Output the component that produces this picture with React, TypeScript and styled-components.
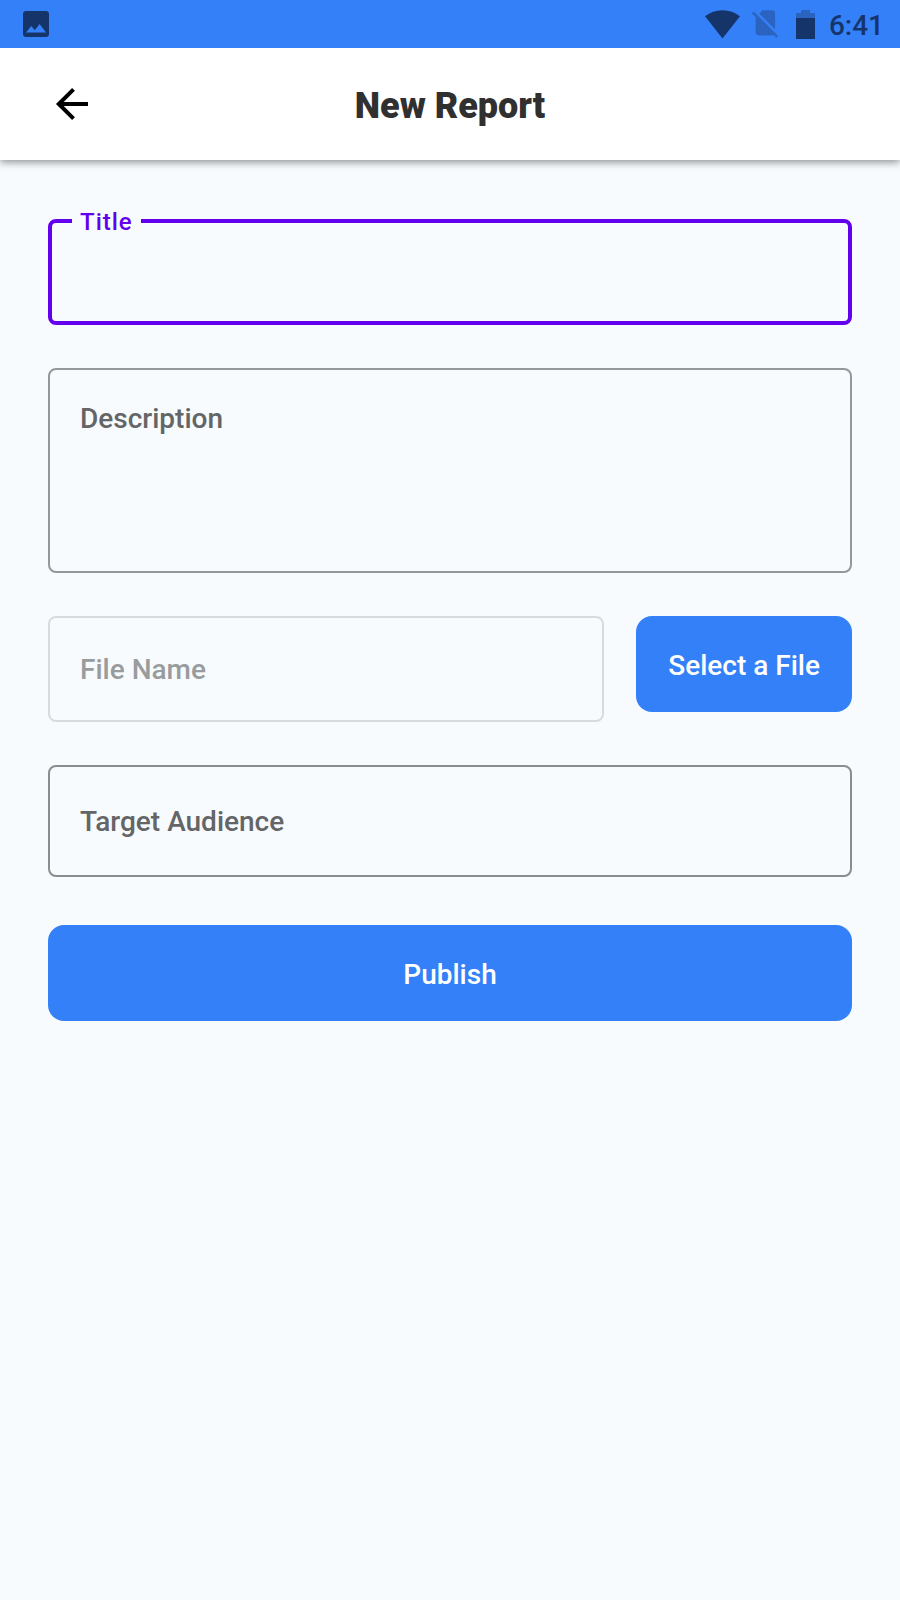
import React, { useState } from "react";
import styled, { createGlobalStyle } from "styled-components";

const color = {
  blue: "#3480f8",
  navy: "#15356a",
  faded: "#2a64c0",
  page: "#f7fbfe",
  ink: "#303030",
  accent: "#6200ee",
  label: "#646567",
  outline: "#959899",
  outlineDark: "#8a8d8e",
  outlineOff: "#d7dbde",
  labelOff: "#999c9d",
};

const GlobalStyle = createGlobalStyle`
  *, *::before, *::after { box-sizing: border-box; }
  body {
    margin: 0;
    background: ${color.page};
    font-family: Roboto, "Liberation Sans", sans-serif;
    font-size: 28px;
    font-weight: 500;
  }
`;

const Screen = styled.div`
  min-height: 100vh;
  background: ${color.page};
`;

const StatusBar = styled.div`
  position: relative;
  z-index: 1;
  display: flex;
  align-items: center;
  justify-content: space-between;
  height: 48px;
  padding: 0 16px 0 23px;
  background: ${color.blue};
  color: ${color.navy};
`;

const StatusIcons = styled.div`
  display: flex;
  align-items: center;
`;

const Clock = styled.time`
  margin-left: 14px;
  padding-top: 4px;
  line-height: 44px;
`;

const Header = styled.header`
  display: grid;
  grid-template-columns: 1fr auto 1fr;
  align-items: center;
  height: 112px;
  padding: 0 48px;
  background: #fff;
  box-shadow: 0 2px 8px rgba(0, 0, 0, 0.45);
`;

const BackButton = styled.button`
  display: flex;
  justify-self: start;
  padding: 0;
  border: 0;
  background: none;
  cursor: pointer;
`;

const Heading = styled.h1`
  margin: 0;
  padding-top: 4px;
  color: ${color.ink};
  font-size: 36px;
  font-weight: 900;
  line-height: 44px;
`;

const Form = styled.form`
  display: flex;
  flex-direction: column;
  gap: 43px;
  padding: 59px 48px 48px;
`;

const FileRow = styled.div`
  display: flex;
  align-items: flex-start;
  gap: 32px;
`;

const Field = styled.div`
  position: relative;
  flex: 1;
  display: flex;
  min-width: 0;
`;

type ControlProps = { $size?: number; $tone?: string; $active?: boolean };

const TextInput = styled.input<ControlProps>`
  width: 100%;
  height: ${(p) => p.$size ?? 106}px;
  padding: 0 30px;
  border: ${(p) => (p.$active ? 4 : 2)}px solid
    ${(p) => (p.$active ? color.accent : p.$tone ?? color.outline)};
  border-radius: 8px;
  outline: 0;
  background: transparent;
  color: ${color.ink};
  font: inherit;
`;

const TextArea = styled(TextInput).attrs({ as: "textarea" })`
  padding: 32px 30px;
  resize: none;
`;

const Label = styled.label<{ $tone?: string; $top?: boolean }>`
  position: absolute;
  left: 32px;
  top: ${(p) => (p.$top ? "33px" : "0")};
  bottom: ${(p) => (p.$top ? "auto" : "0")};
  display: flex;
  align-items: center;
  padding-top: 2px;
  color: ${(p) => p.$tone ?? color.label};
  line-height: 32px;
  pointer-events: none;
`;

const FloatingLabel = styled.label`
  position: absolute;
  left: 24px;
  top: -11px;
  padding: 0 8px;
  background: ${color.page};
  color: ${color.accent};
  font-size: 24px;
  line-height: 28px;
  letter-spacing: 1px;
`;

const Button = styled.button`
  height: 96px;
  padding: 2px 32px 0;
  border: 0;
  border-radius: 16px;
  background: ${color.blue};
  color: #fff;
  font: inherit;
  white-space: nowrap;
  cursor: pointer;
`;

const PublishButton = styled(Button)`
  margin-top: 5px;
`;

const ImageIcon = () => (
  <svg width="26" height="26" viewBox="0 0 26 26" aria-hidden="true">
    <rect width="26" height="26" rx="3" fill={color.navy} />
    <path d="M3 21.5 8.3 15l3.5 4.2 4.8-6.2 6.4 8.5z" fill={color.blue} />
  </svg>
);

const WifiIcon = () => (
  <svg width="35" height="29" viewBox="0 0 35 29" aria-hidden="true">
    <path d="M17.5 28.5 0 6.3C5 2.3 11 .2 17.5.2S30 2.3 35 6.3z" fill={color.navy} />
  </svg>
);

const SimIconSlot = styled.span`
  display: flex;
  margin: 0 18px 0 12px;
`;

const NoSimIcon = () => (
  <svg width="26" height="28" viewBox="2.4 2.8 18.7 20" aria-hidden="true">
    <path
      d="M18.99 5c0-1.1-.89-2-1.99-2h-7L7.66 5.34 19 16.68 18.99 5zM3.65 3.88 2.38 5.15 5 7.77V19c0 1.1.9 2 2 2h10.01c.35 0 .67-.1.96-.26l1.88 1.88 1.27-1.27L3.65 3.88z"
      fill={color.faded}
    />
  </svg>
);

const BatteryIcon = () => (
  <svg width="19" height="29" viewBox="0 0 19 29" aria-hidden="true">
    <path d="M0 8V3h5V0h9v3h5v5z" fill={color.faded} />
    <path d="M0 8h19v21H0z" fill={color.navy} />
  </svg>
);

const ArrowIcon = () => (
  <svg width="48" height="48" viewBox="0 0 48 48" aria-hidden="true">
    <path d="M40 24H11M25.5 9.3 10.8 24 25.5 38.7" fill="none" stroke="#000" strokeWidth="4" />
  </svg>
);

export default function App() {
  const [values, setValues] = useState({ title: "", description: "", audience: "" });
  const update =
    (key: keyof typeof values) =>
    (e: React.ChangeEvent<HTMLInputElement>) =>
      setValues({ ...values, [key]: e.target.value });

  return (
    <Screen>
      <GlobalStyle />
      <StatusBar>
        <ImageIcon />
        <StatusIcons>
          <WifiIcon />
          <SimIconSlot>
            <NoSimIcon />
          </SimIconSlot>
          <BatteryIcon />
          <Clock>6:41</Clock>
        </StatusIcons>
      </StatusBar>
      <Header>
        <BackButton type="button" aria-label="Back">
          <ArrowIcon />
        </BackButton>
        <Heading>New Report</Heading>
      </Header>
      <Form onSubmit={(e) => e.preventDefault()}>
        <Field>
          <TextInput id="title" $active value={values.title} onChange={update("title")} />
          <FloatingLabel htmlFor="title">Title</FloatingLabel>
        </Field>
        <Field>
          <TextArea id="description" $size={205} value={values.description} onChange={update("description")} />
          {!values.description && <Label htmlFor="description" $top>Description</Label>}
        </Field>
        <FileRow>
          <Field>
            <TextInput id="file-name" $tone={color.outlineOff} disabled />
            <Label htmlFor="file-name" $tone={color.labelOff}>File Name</Label>
          </Field>
          <Button type="button">Select a File</Button>
        </FileRow>
        <Field>
          <TextInput
            id="audience"
            $size={112}
            $tone={color.outlineDark}
            value={values.audience}
            onChange={update("audience")}
          />
          {!values.audience && <Label htmlFor="audience">Target Audience</Label>}
        </Field>
        <PublishButton type="submit">Publish</PublishButton>
      </Form>
    </Screen>
  );
}
